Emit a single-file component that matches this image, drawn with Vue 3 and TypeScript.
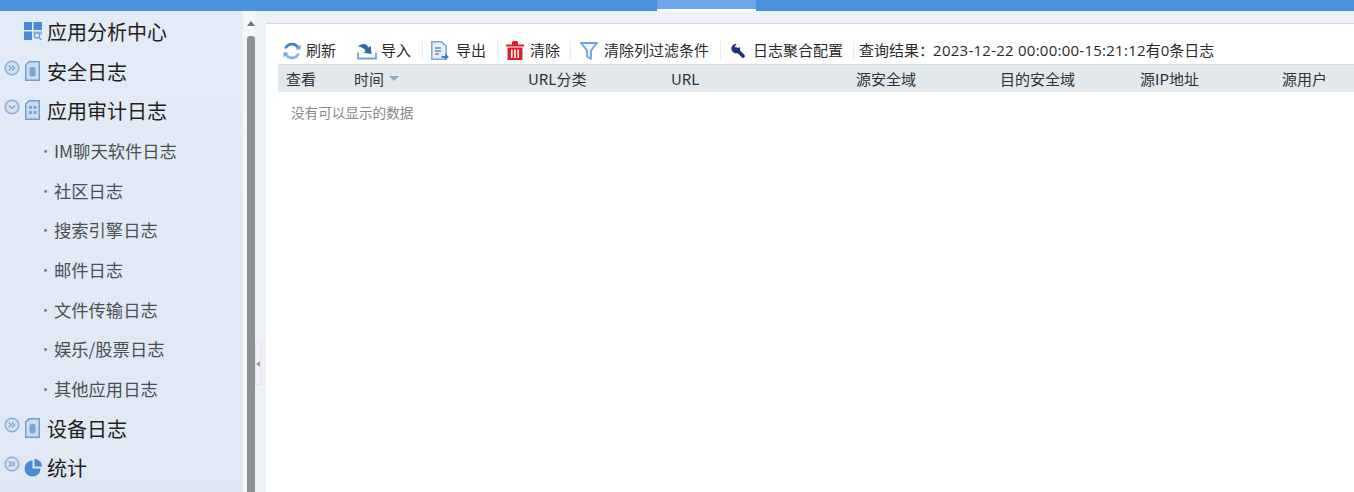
<template>
  <div class="page">
    <div class="topbar">
      <div class="tab-active"></div>
    </div>
    <div class="main">
      <aside class="sidebar">
        <div
          v-for="item in menu"
          :key="item.label"
          :class="['menu-row', item.sub ? 'menu-sub' : 'menu-top']"
        >
          <template v-if="item.sub">
            <span class="dot">·</span>{{ item.label }}
          </template>
          <template v-else>
            <svg v-if="item.expander" class="expander" viewBox="0 0 16 16">
              <circle cx="8" cy="8" r="6.8" fill="#d3e1f1" stroke="#8fb0d6" stroke-width="1.6" />
              <path
                :d="item.open ? 'M5 6.5l3 3 3-3' : 'M4.8 5.5l2.6 2.5-2.6 2.5M8 5.5l2.6 2.5L8 10.5'"
                fill="none"
                stroke="#7fa3cc"
                stroke-width="1.2"
              />
            </svg>
            <span v-else class="expander"></span>

            <svg v-if="item.icon === 'grid'" class="menu-icon" viewBox="0 0 18 18">
              <path d="M0 0h8v8H0zM9.500 0H18v8H9.500zM0 9.500h8V18H0z" fill="#4a8ad4" />
              <path d="M9.500 9.500H18V13h-1a4 4 0 0 0-7.500 0z" fill="#8db5e2" />
              <circle cx="13" cy="13.500" r="2.600" fill="none" stroke="#6d9bd0" stroke-width="1.300" />
              <path d="M15 15.500l2.500 2.500" stroke="#6d9bd0" stroke-width="1.300" />
            </svg>
            <svg v-else-if="item.icon === 'pie'" class="menu-icon pie" viewBox="0 0 20 20">
              <path d="M9 2.500V11h8.500A8.500 8.500 0 1 1 9 2.500z" fill="#4a8ad4" />
              <path d="M11 1a8 8 0 0 1 8 8h-8z" fill="#4a8ad4" />
            </svg>
            <svg v-else class="menu-icon doc" viewBox="0 0 15 20">
              <path d="M4 .7h10.300v18.600H.7V4z" fill="#c9dcf0" stroke="#6e9fd3" stroke-width="1.400" />
              <rect v-if="item.icon === 'doc'" x="4.500" y="6" width="6" height="9.500" rx="2" fill="#7ba5d2" />
              <path
                v-else
                d="M4 6h3v3H4zM8.500 6h3v3h-3zM4 11h3v3H4zM8.500 11h3v3h-3z"
                fill="#7ba5d2"
              />
            </svg>
            <span class="menu-label">{{ item.label }}</span>
          </template>
        </div>
      </aside>

      <div class="scroll-gutter">
        <div class="scroll-arrow"></div>
        <div class="scroll-thumb"></div>
      </div>

      <div class="splitter-col">
        <div class="splitter"><span class="splitter-arrow"></span></div>
      </div>

      <section class="content">
        <div class="toolbar">
          <div class="tool tool-refresh">
            <svg class="ic-refresh" viewBox="0 0 18 18">
              <path d="M2.500 6.500A7 7 0 0 1 15 5.500" fill="none" stroke="#3f82d0" stroke-width="2.600" />
              <path d="M15.500 11.500A7 7 0 0 1 3 12.500" fill="none" stroke="#86b3e3" stroke-width="2.600" />
              <path d="M17.500 2.500V7.500h-5zM.5 15.500V10.500h5z" fill="#6fa3dc" />
            </svg>
            <span>刷新</span>
          </div>
          <div class="tool tool-import">
            <svg class="ic-import" viewBox="0 0 20 18">
              <path d="M1 10.500v6h18v-6" fill="none" stroke="#6fa3dc" stroke-width="1.800" />
              <path d="M1 4.500c3.500-3.500 9-3.500 10.500 1l2.300-1.800.7 8.300-8-1.300 2.200-1.700C7.500 6.500 4.500 4.800 1 4.500z" fill="#2f69ae" />
            </svg>
            <span>导入</span>
          </div>
          <i class="sep sep-import"></i>
          <div class="tool tool-export">
            <svg class="ic-export" viewBox="0 0 18 19">
              <path d="M.8.800h9.700l4.700 4.700v12.700H.8z" fill="#e7f0fa" stroke="#7aa8da" stroke-width="1.500" />
              <path d="M4 7h6M4 10h6M4 13h4" stroke="#5c90c8" stroke-width="1.300" />
              <path d="M10.500 15h3.500v-2.500l4 3.500-4 3v-2h-3.500z" fill="#3f7fc6" />
            </svg>
            <span>导出</span>
          </div>
          <i class="sep sep-export"></i>
          <div class="tool tool-clear">
            <svg class="ic-clear" viewBox="0 0 18 19">
              <path d="M0 3.500h18v2H0zM6 1.200L7 0h4l1 1.200v2.300H6z" fill="#dd1f2c" />
              <path d="M1.500 6.500h15V19h-15zM5 8.500V17h1.600V8.500zM8.200 8.500V17h1.600V8.500zM11.400 8.500V17H13V8.500z" fill="#dd1f2c" fill-rule="evenodd" />
            </svg>
            <span>清除</span>
          </div>
          <i class="sep sep-clear"></i>
          <div class="tool tool-filter">
            <svg class="ic-filter" viewBox="0 0 18 18">
              <path d="M1 1h16l-6 7.500v8.500l-4-2.500V8.500z" fill="#eef5fc" stroke="#6fa3dc" stroke-width="1.800" stroke-linejoin="round" />
            </svg>
            <span>清除列过滤条件</span>
          </div>
          <i class="sep sep-filter"></i>
          <div class="tool tool-wrench">
            <svg class="ic-wrench" viewBox="0 0 14 14">
              <path d="M5 5l7 7" stroke="#1d2f7a" stroke-width="3.600" stroke-linecap="round" />
              <path d="M5.500 0a4.500 4.500 0 0 0-5 5.500 4.500 4.500 0 0 0 7.500 2.500 4.500 4.500 0 0 0 .5-5L5.500 5 3.500 3z" fill="#1d2f7a" />
            </svg>
            <span>日志聚合配置</span>
          </div>
          <i class="sep sep-wrench"></i>
          <div class="query">查询结果：<span class="query-time">2023-12-22 00:00:00-15:21:12</span>有0条日志</div>
        </div>

        <div class="thead">
          <div v-for="col in columns" :key="col.label" class="th">
            {{ col.label }}
            <i v-if="col.sorted" class="sort-caret"></i>
          </div>
        </div>
        <div class="empty">没有可以显示的数据</div>
      </section>
    </div>
  </div>
</template>

<script setup lang="ts">
interface MenuItem {
  label: string
  sub?: boolean
  expander?: boolean
  open?: boolean
  icon?: 'grid' | 'doc' | 'table' | 'pie'
}

const menu: MenuItem[] = [
  { label: '应用分析中心', icon: 'grid' },
  { label: '安全日志', icon: 'doc', expander: true },
  { label: '应用审计日志', icon: 'table', expander: true, open: true },
  { label: 'IM聊天软件日志', sub: true },
  { label: '社区日志', sub: true },
  { label: '搜索引擎日志', sub: true },
  { label: '邮件日志', sub: true },
  { label: '文件传输日志', sub: true },
  { label: '娱乐/股票日志', sub: true },
  { label: '其他应用日志', sub: true },
  { label: '设备日志', icon: 'doc', expander: true },
  { label: '统计', icon: 'pie', expander: true }
]

const columns = [
  { label: '查看' },
  { label: '时间', sorted: true },
  { label: 'URL分类' },
  { label: 'URL' },
  { label: '源安全域' },
  { label: '目的安全域' },
  { label: '源IP地址' },
  { label: '源用户' }
]
</script>

<style>
html,
body {
  margin: 0;
  overflow: hidden;
}
</style>

<style scoped>
.page {
  width: 1354px;
  height: 492px;
  overflow: hidden;
  display: flex;
  flex-direction: column;
  font-family: "Noto Sans CJK SC", "Noto Sans", sans-serif;
  background: #eef2f7;
}

.topbar {
  height: 11px;
  background: #4b90de;
  padding-left: 657px;
  flex-shrink: 0;
}

.tab-active {
  width: 99px;
  height: 9px;
  background: #6da5e8;
  border-bottom: 2px solid #fff;
}

.main {
  flex: 1;
  display: flex;
  min-height: 0;
}

.sidebar {
  width: 243px;
  flex-shrink: 0;
  padding-top: 0.500px;
  box-sizing: border-box;
  background: linear-gradient(180deg, #e2ebf6 0%, #dfe8f3 100%);
}

.menu-row {
  height: 39.700px;
  display: flex;
  align-items: center;
  white-space: nowrap;
}

.menu-top {
  padding-left: 4px;
  font-size: 20px;
  color: #1f1f1f;
}

.expander {
  width: 16px;
  height: 16px;
  flex-shrink: 0;
  margin-top: -7px;
}

.menu-icon {
  width: 18px;
  height: 18px;
  margin: -1px 0 0 4px;
  flex-shrink: 0;
}

.menu-icon.doc {
  width: 15px;
  height: 20px;
  margin-left: 5px;
}

.menu-icon.pie {
  width: 19px;
  height: 19px;
  margin-left: 4px;
}

.menu-label {
  margin-left: 5px;
}

.menu-icon.doc + .menu-label {
  margin-left: 7px;
}

.menu-icon.pie + .menu-label {
  margin-left: 4px;
}

.menu-sub {
  padding-left: 39px;
  font-size: 17.300px;
  color: #4c4f55;
}

.dot {
  width: 15px;
  font-size: 13px;
  color: #777;
}

.scroll-gutter {
  width: 12px;
  flex-shrink: 0;
  padding-left: 4px;
  box-sizing: border-box;
  background: #f4f6f9;
  display: flex;
  flex-direction: column;
}

.scroll-arrow {
  width: 0;
  height: 0;
  margin: 10px 0 0;
  border-left: 4px solid transparent;
  border-right: 4px solid transparent;
  border-bottom: 5px solid #6f7478;
}

.scroll-thumb {
  width: 8px;
  flex: 1;
  margin-top: 10px;
  border-radius: 3px 3px 0 0;
  background: #8d9195;
}

.splitter-col {
  width: 11px;
  flex-shrink: 0;
  padding-top: 331px;
  background: #eef2f7;
}

.splitter {
  width: 6px;
  height: 43px;
  display: flex;
  align-items: center;
  justify-content: center;
  box-sizing: border-box;
  border: 1px solid #e2e6ea;
  background: #f1f3f6;
}

.splitter-arrow {
  width: 0;
  height: 0;
  border-top: 3px solid transparent;
  border-bottom: 3px solid transparent;
  border-right: 4px solid #9a9ea3;
}

.content {
  flex: 1;
  min-width: 0;
  margin-top: 13px;
  background: #fff;
  box-shadow: 0 -1px 1px #d3d6da;
  padding-left: 12px;
}

.toolbar {
  height: 40px;
  display: flex;
  align-items: center;
  padding-top: 11px;
  box-sizing: border-box;
  font-size: 15px;
  color: #2a2a2a;
  white-space: nowrap;
}

.tool {
  display: flex;
  align-items: center;
  flex-shrink: 0;
}

.tool span {
  line-height: 20px;
}

.tool svg {
  margin-top: 2px;
}

.ic-refresh {
  width: 18px;
  height: 18px;
  margin: 0 5px 0 5px;
}

.tool-import {
  margin-left: 21px;
}

.ic-import {
  width: 20px;
  height: 18px;
  margin-right: 4px;
}

.ic-export {
  width: 18px;
  height: 19px;
  margin-right: 7px;
}

.ic-clear {
  width: 18px;
  height: 19px;
  margin-right: 6px;
}

.ic-filter {
  width: 18px;
  height: 18px;
  margin-right: 6px;
}

.ic-wrench {
  width: 14px;
  height: 14px;
  margin-right: 8px;
}

.query {
  font-family: "Open Sans", "Noto Sans CJK SC", sans-serif;
}

.query-time {
  margin-left: -1px;
  letter-spacing: 0.250px;
}

.sep {
  width: 1px;
  height: 18px;
  flex-shrink: 0;
  background: #e6e9ed;
}

.sep-import {
  margin: 0 8px 0 11px;
}

.sep-export {
  margin: 0 8px 0 11px;
}

.sep-clear {
  margin: 0 9px 0 10px;
}

.sep-filter {
  margin: 0 10px 0 11px;
}

.sep-wrench {
  margin: 0 5px 0 10px;
}

.thead {
  height: 28px;
  display: grid;
  grid-template-columns: 68px 174px 143px 185px 144px 140px 142px 1fr;
  align-items: center;
  padding: 0 0 1px 8px;
  background: #e2e8ec;
  border-top: 1px solid #d7dce0;
  box-sizing: border-box;
  font-size: 15px;
  color: #2f3236;
  white-space: nowrap;
}

.th {
  display: flex;
  align-items: center;
}

.sort-caret {
  width: 0;
  height: 0;
  margin-left: 5px;
  border-left: 5px solid transparent;
  border-right: 5px solid transparent;
  border-top: 5px solid #8fa6cc;
}

.empty {
  padding: 10px 0 0 13px;
  font-size: 13.600px;
  line-height: 20px;
  color: #85888c;
}
</style>
